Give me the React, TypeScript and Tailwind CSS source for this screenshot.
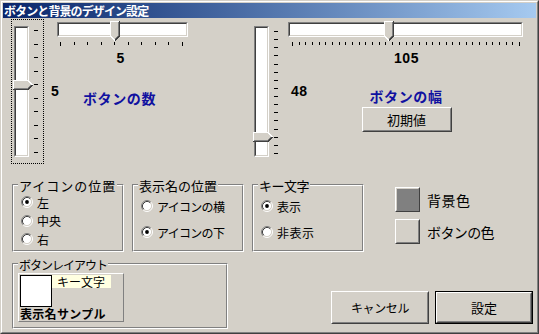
import React from "react";

const raisedOuter = "border border-t-white border-l-white border-r-[#404040] border-b-[#404040]";
const raisedInner = "border border-t-[#d4d0c8] border-l-[#d4d0c8] border-r-[#808080] border-b-[#808080]";

function ThumbRight({ className }: { className: string }) {
  return (
    <svg width="20" height="10" viewBox="0 0 20 10" className={className} shapeRendering="crispEdges">
      <polygon points="0,0 15,0 20,5 15,10 0,10" fill="#d4d0c8" />
      <path d="M0.5 10 V0.5 H15 L19.5 5" stroke="#ffffff" fill="none" />
      <path d="M0 9.5 H15 L19.5 5" stroke="#404040" fill="none" />
      <path d="M1 8.5 H14.5 L18.3 5" stroke="#808080" fill="none" />
    </svg>
  );
}

function ThumbDown({ className }: { className: string }) {
  return (
    <svg width="10" height="20" viewBox="0 0 10 20" className={className} shapeRendering="crispEdges">
      <polygon points="0,0 10,0 10,15 5,20 0,15" fill="#d4d0c8" />
      <path d="M5 19.5 L0.5 15 V0.5 H10" stroke="#ffffff" fill="none" />
      <path d="M9.5 0 V15 L5 19.5" stroke="#404040" fill="none" />
      <path d="M8.5 1 V14.5 L5 18" stroke="#808080" fill="none" />
    </svg>
  );
}

function HTicks({ width, count, start, end }: { width: number; count: number; start: number; end: number }) {
  const ticks = [];
  for (let i = 0; i < count; i++) {
    const x = Math.round(start + (i * (end - start)) / (count - 1));
    const h = i === 0 || i === count - 1 ? 4 : 3;
    ticks.push(<rect key={i} x={x} y={0} width={1} height={h} fill="#000" />);
  }
  return (
    <svg width={width} height={4} className="block">
      {ticks}
    </svg>
  );
}

function VTicks({ count, start, end }: { count: number; start: number; end: number }) {
  const ticks = [];
  for (let i = 0; i < count; i++) {
    const y = Math.round(start + (i * (end - start)) / (count - 1));
    ticks.push(<rect key={i} x={0} y={y} width={4} height={1} fill="#000" />);
  }
  return (
    <svg width={4} height={131} className="block">
      {ticks}
    </svg>
  );
}

function VSlider({ focus, thumbTop, label, tickCount, tickStart, tickEnd }: { focus: boolean; thumbTop: string; label: string; tickCount: number; tickStart: number; tickEnd: number }) {
  return (
    <div
      className={
        "relative w-[33px] h-[145px] border flex items-start " +
        (focus ? "border-dotted border-black" : "border-transparent")
      }
    >
      <div className="relative ml-[2px] mt-[6px] w-[15px] h-[131px] border border-t-[#808080] border-l-[#808080] border-r-white border-b-white">
        <div className="h-full border border-t-[#404040] border-l-[#404040] border-r-[#d4d0c8] border-b-[#d4d0c8] bg-white" />
        <ThumbRight className={"absolute left-[-2px] " + thumbTop} />
      </div>
      <div className="ml-[5px] mt-[6px]">
        <VTicks count={tickCount} start={tickStart} end={tickEnd} />
      </div>
      <span className="absolute left-[39px] top-[63px] font-['Liberation_Sans',sans-serif] font-bold text-[14px] leading-[16px] tracking-[0.5px] whitespace-nowrap text-black">
        {label}
      </span>
    </div>
  );
}

function HTrack({ thumbLeft }: { thumbLeft: string }) {
  return (
    <div className="relative w-full h-[15px] border border-t-[#808080] border-l-[#808080] border-r-white border-b-white">
      <div className="h-full border border-t-[#404040] border-l-[#404040] border-r-[#d4d0c8] border-b-[#d4d0c8] bg-white" />
      <ThumbDown className={"absolute top-[-2px] " + thumbLeft} />
    </div>
  );
}

function Radio({ checked }: { checked: boolean }) {
  return (
    <svg width="12" height="12" viewBox="0 0 12 12" className="block shrink-0">
      <circle cx="6" cy="6" r="4.5" fill="#ffffff" />
      <path d="M2.11 9.89 A5.5 5.5 0 0 1 9.89 2.11" stroke="#808080" fill="none" />
      <path d="M9.89 2.11 A5.5 5.5 0 0 1 2.11 9.89" stroke="#ffffff" fill="none" />
      <path d="M2.82 9.18 A4.5 4.5 0 0 1 9.18 2.82" stroke="#404040" fill="none" />
      <path d="M9.18 2.82 A4.5 4.5 0 0 1 2.82 9.18" stroke="#d4d0c8" fill="none" />
      {checked && <circle cx="6" cy="6" r="1.9" fill="#000" />}
    </svg>
  );
}

function RadioRow({ checked, label, h, tracking }: { checked: boolean; label: string; h: string; tracking?: string }) {
  return (
    <div className={"flex items-center " + h}>
      <Radio checked={checked} />
      <span className={"ml-[4px] text-[12px] leading-[13px] whitespace-nowrap " + (tracking ?? "")}>{label}</span>
    </div>
  );
}

function Group({ title, w, h, titleClass, titleTop, children }: { title: string; w: string; h: string; titleClass: string; titleTop: string; children: React.ReactNode }) {
  return (
    <div className={"relative shrink-0 border border-t-[#808080] border-l-[#808080] border-r-white border-b-white " + w + " " + h}>
      <div className="h-full border border-t-white border-l-white border-r-[#808080] border-b-[#808080]">{children}</div>
      <span className={"absolute left-[5px] bg-[#d4d0c8] px-px leading-[12px] whitespace-nowrap " + titleTop + " " + titleClass}>
        {title}
      </span>
    </div>
  );
}

function Button({ label, w, h, textClass, isDefault }: { label: string; w: string; h: string; textClass: string; isDefault?: boolean }) {
  const inner = (
    <div className={"h-full " + raisedOuter}>
      <div className={"h-full flex items-center justify-center " + raisedInner}>
        <span className={"whitespace-nowrap " + textClass}>{label}</span>
      </div>
    </div>
  );
  return (
    <div className={"shrink-0 " + w + " " + h + (isDefault ? " border border-black" : "")}>{inner}</div>
  );
}

function Swatch({ fill }: { fill: string }) {
  return (
    <div className={"w-[25px] h-[25px] shrink-0 " + raisedOuter}>
      <div className={"h-full " + raisedInner + " " + fill} />
    </div>
  );
}

export default function App() {
  return (
    <div className="w-[539px] h-[334px] bg-[#d4d0c8] border border-t-[#d4d0c8] border-l-[#d4d0c8] border-r-[#404040] border-b-[#404040] font-['Noto_Sans_CJK_JP',sans-serif] text-black overflow-hidden">
      <div className="h-full border border-t-white border-l-white border-r-[#808080] border-b-[#808080] p-px flex flex-col">
        <div className="h-[15px] shrink-0 bg-linear-to-r from-[#0a246a] to-[#a6caf0] text-white font-bold text-[12px] leading-[15px] pl-px tracking-[-0.9px] whitespace-nowrap">
          ボタンと背景のデザイン設定
        </div>
        <div className="flex-1 flex flex-col">
          {/* Top sliders */}
          <div className="flex items-start mt-[1px] pl-[8px] h-[145px]">
            <VSlider focus thumbTop="top-[53px]" label="5" tickCount={10} tickStart={4} tickEnd={126} />
            <div className="ml-[13px] w-[131px] flex flex-col">
              <div className="mt-[3px]">
                <HTrack thumbLeft="left-[52px]" />
              </div>
              <div className="mt-[5px]">
                <HTicks width={131} count={10} start={3} end={125} />
              </div>
              <div className="mt-[4px] pr-[4px] text-center font-['Liberation_Sans',sans-serif] font-bold text-[14px] leading-[16px]">5</div>
              <div className="mt-[24px] pr-[6px] text-center font-bold text-[14px] leading-[16px] tracking-[0.6px] text-[#1010a0] whitespace-nowrap">
                ボタンの数
              </div>
            </div>
            <div className="ml-[63px]">
              <VSlider focus={false} thumbTop="top-[105px]" label="48" tickCount={16} tickStart={5} tickEnd={127} />
            </div>
            <div className="ml-[4px] w-[235px] flex flex-col">
              <div className="mt-[3px]">
                <HTrack thumbLeft="left-[95px]" />
              </div>
              <div className="mt-[5px]">
                <HTicks width={235} count={35} start={4} end={231} />
              </div>
              <div className="mt-[4px] pl-[2px] text-center font-['Liberation_Sans',sans-serif] font-bold text-[14px] leading-[16px] tracking-[0.5px]">105</div>
              <div className="mt-[22px] pl-[1px] text-center font-bold text-[14px] leading-[16px] tracking-[0.6px] text-[#1010a0] whitespace-nowrap">
                ボタンの幅
              </div>
              <div className="mt-[3px] pl-[2px] flex justify-center">
                <Button label="初期値" w="w-[90px]" h="h-[25px]" textClass="text-[13px] leading-[15px]" />
              </div>
            </div>
          </div>

          {/* Group boxes */}
          <div className="flex items-start mt-[20px] pl-[9px]">
            <Group title="アイコンの位置" w="w-[112px]" h="h-[68px]" titleTop="top-[-5px]" titleClass="text-[13px] tracking-[1px]">
              <div className="pl-[7px] pt-[7px] flex flex-col">
                <RadioRow checked label="左" h="h-[18px]" />
                <RadioRow checked={false} label="中央" h="h-[19px]" />
                <RadioRow checked={false} label="右" h="h-[18px]" />
              </div>
            </Group>
            <div className="ml-[8px]">
              <Group title="表示名の位置" w="w-[112px]" h="h-[68px]" titleTop="top-[-5px]" titleClass="text-[13px]">
                <div className="pl-[7px] pt-[7px] flex flex-col">
                  <RadioRow checked={false} label="アイコンの横" h="h-[26px]" tracking="tracking-[-0.7px]" />
                  <RadioRow checked label="アイコンの下" h="h-[26px]" tracking="tracking-[-0.7px]" />
                </div>
              </Group>
            </div>
            <div className="ml-[8px]">
              <Group title="キー文字" w="w-[112px]" h="h-[68px]" titleTop="top-[-5px]" titleClass="text-[13px] tracking-[-0.5px]">
                <div className="pl-[7px] pt-[7px] flex flex-col">
                  <RadioRow checked label="表示" h="h-[26px]" />
                  <RadioRow checked={false} label="非表示" h="h-[26px]" tracking="tracking-[0.5px]" />
                </div>
              </Group>
            </div>
            <div className="ml-[31px] mt-[3px] flex flex-col gap-[7px]">
              <div className="flex items-center">
                <Swatch fill="bg-[#808080]" />
                <span className="ml-[7px] text-[14px] leading-[16px] tracking-[0.5px] whitespace-nowrap">背景色</span>
              </div>
              <div className="flex items-center">
                <Swatch fill="bg-[#d4d0c8]" />
                <span className="ml-[7px] text-[14px] leading-[16px] tracking-[-0.6px] whitespace-nowrap">ボタンの色</span>
              </div>
            </div>
          </div>

          {/* Layout group + buttons */}
          <div className="flex items-start mt-[11px] pl-[9px]">
            <Group title="ボタンレイアウト" w="w-[216px]" h="h-[66px]" titleTop="top-[-5px]" titleClass="text-[12px] tracking-[-1px]">
              <div className="ml-[4px] mt-[8px] w-[106px] h-[49px] border border-t-white border-l-white border-r-[#808080] border-b-[#808080] p-px flex flex-col">
                <div className="flex items-start">
                  <div className="w-[32px] h-[32px] bg-white border border-black shrink-0" />
                  <div className="w-[59px] h-[13px] bg-[#ffffe1] text-[12px] leading-[13px] pl-[5px] whitespace-nowrap">キー文字</div>
                </div>
                <div className="text-[12px] leading-[13px] font-bold tracking-[0.3px] whitespace-nowrap">表示名サンプル</div>
              </div>
            </Group>
            <div className="ml-[103px] mt-[28px] flex gap-[6px]">
              <Button label="キャンセル" w="w-[98px]" h="h-[33px]" textClass="text-[12px] leading-[14px] tracking-[-0.4px]" />
              <Button label="設定" w="w-[98px]" h="h-[33px]" textClass="text-[13px] leading-[15px]" isDefault />
            </div>
          </div>
        </div>
      </div>
    </div>
  );
}
